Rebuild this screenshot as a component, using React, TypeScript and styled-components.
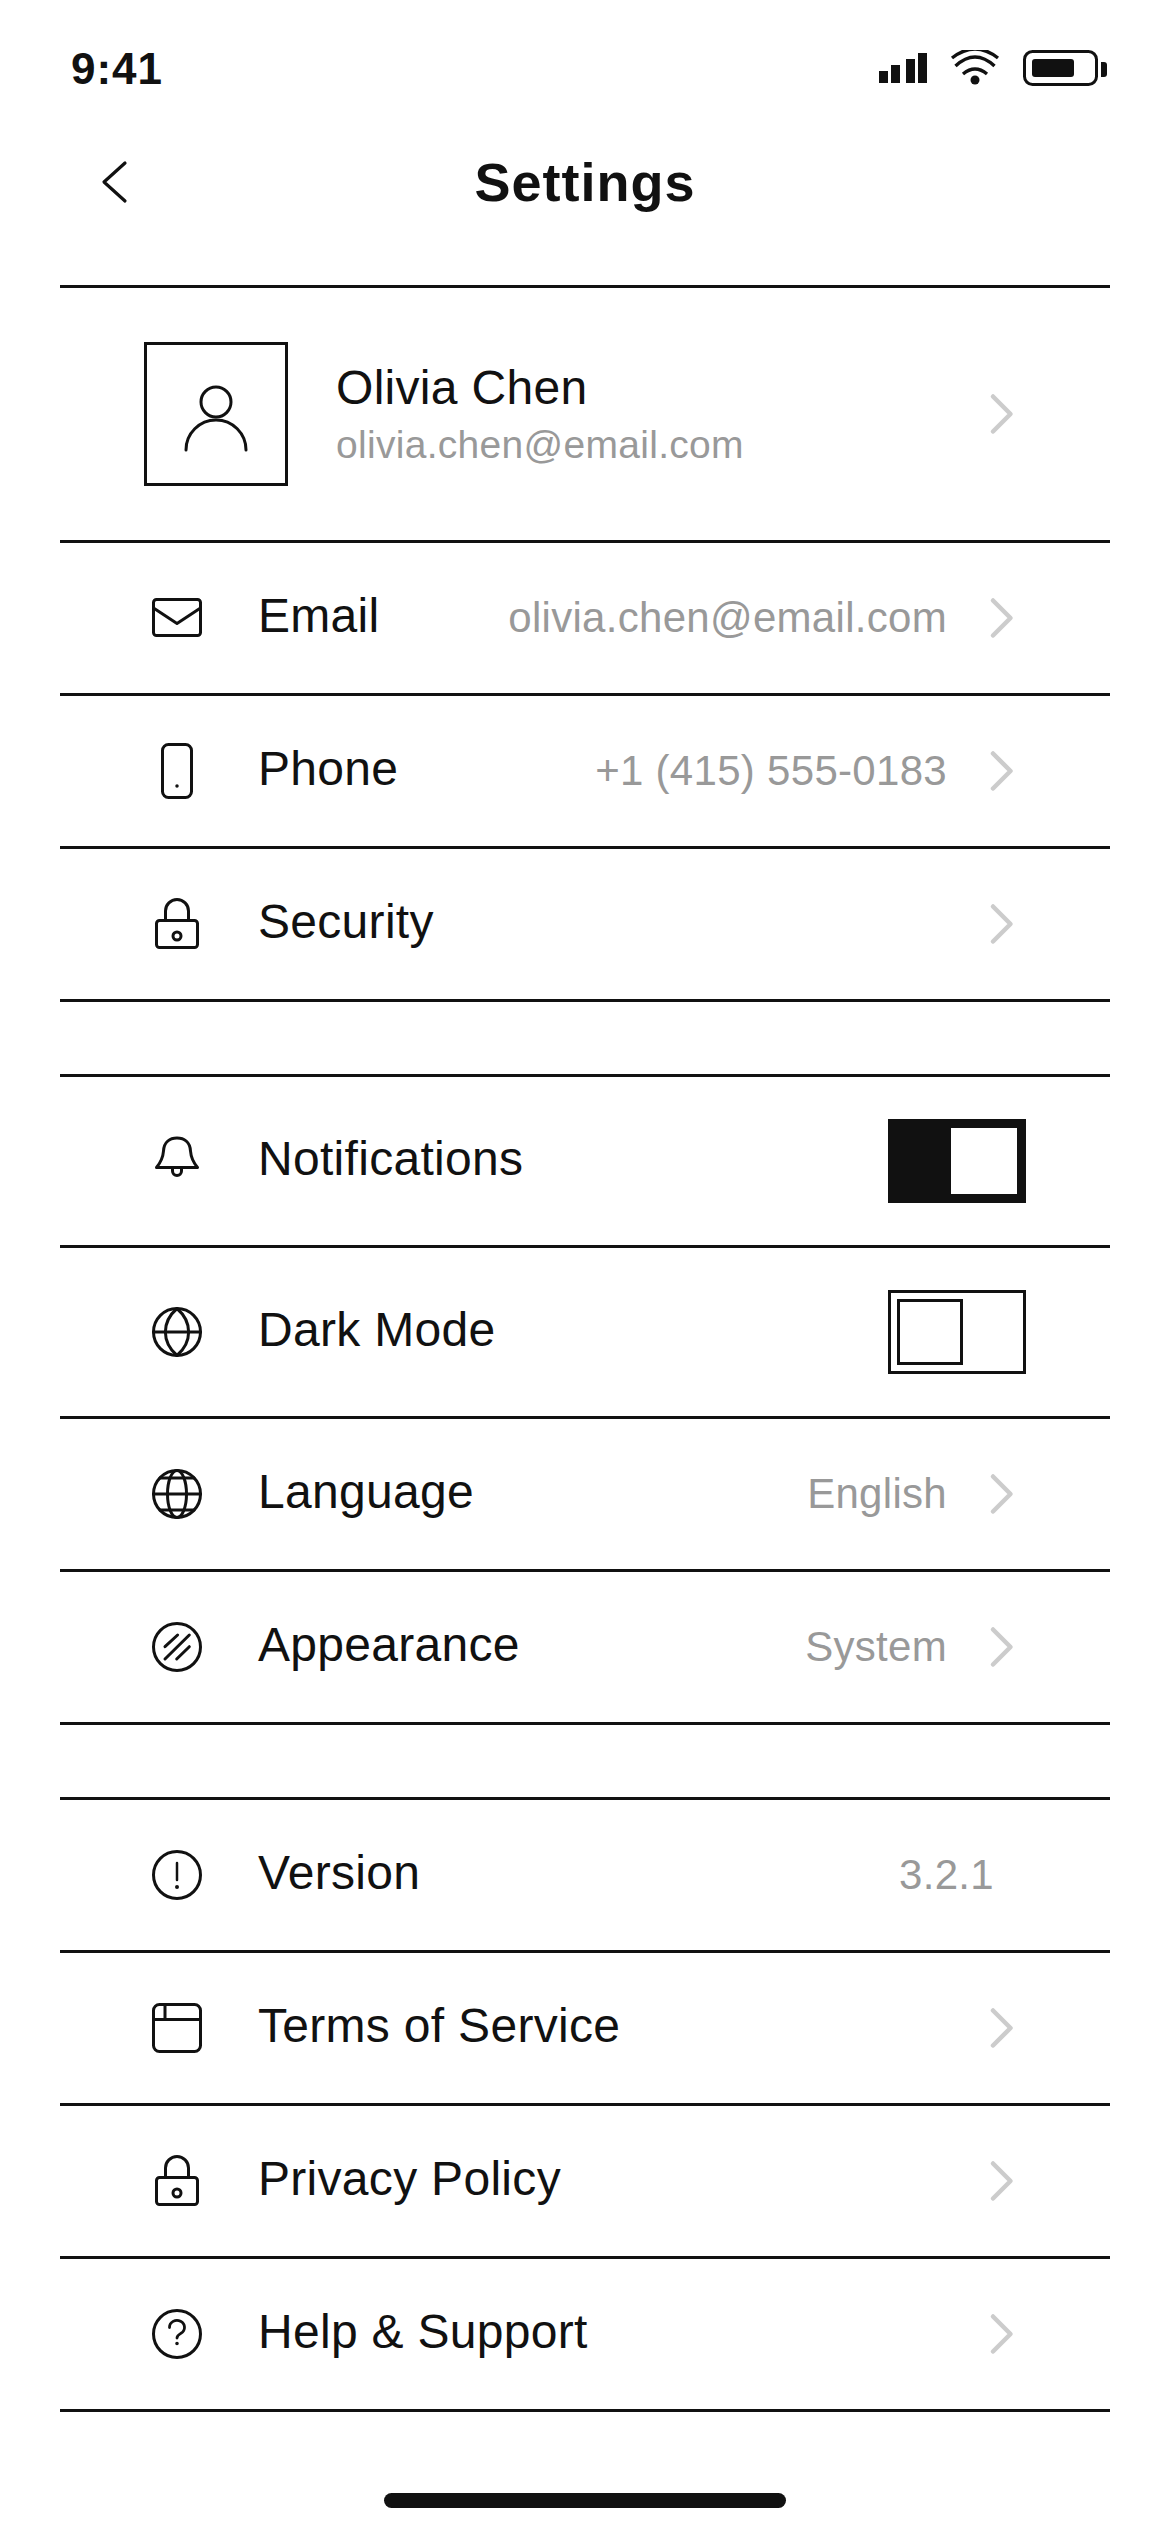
import React from "react";
import styled, { createGlobalStyle } from "styled-components";

const INK = "#111111";

const GlobalStyle = createGlobalStyle`
  html, body {
    margin: 0;
    padding: 0;
    background: #ffffff;
  }
  body {
    font-family: "Liberation Sans", Arial, sans-serif;
    color: ${INK};
  }
`;

const Screen = styled.div`
  width: 1170px;
  height: 2532px;
  padding: 0 60px;
  box-sizing: border-box;
  background: #fff;
  display: flex;
  flex-direction: column;
`;

const StatusBar = styled.div`
  height: 136px;
  flex: none;
  display: flex;
  justify-content: space-between;
  align-items: center;
`;

const Clock = styled.span`
  font-size: 44px;
  font-weight: 700;
  letter-spacing: 1px;
  margin-left: 11px;
  margin-top: 2px;
`;

const StatusIcons = styled.svg`
  display: block;
  margin-right: 3px;
`;

const NavBar = styled.header`
  height: 152px;
  flex: none;
  box-sizing: border-box;
  position: relative;
  display: flex;
  align-items: center;
  justify-content: center;
  border-bottom: 3px solid ${INK};
  padding-bottom: 57px;
`;

const BackIcon = styled.svg`
  position: absolute;
  left: 40px;
  top: 24px;
`;

const Title = styled.h1`
  margin: 0;
  font-size: 54px;
  font-weight: 700;
  letter-spacing: 1px;
`;

const Group = styled.section<{ $top?: number }>`
  margin-top: ${(p) => p.$top ?? 72}px;
  border-top: ${(p) => (p.$top === 0 ? "none" : `3px solid ${INK}`)};
`;

const ProfileRow = styled.div`
  height: 255px;
  box-sizing: border-box;
  display: flex;
  align-items: center;
  padding-left: 84px;
  padding-right: 95px;
  border-bottom: 3px solid ${INK};
`;

const Avatar = styled.div`
  width: 144px;
  height: 144px;
  box-sizing: border-box;
  border: 3px solid ${INK};
  display: flex;
  align-items: center;
  justify-content: center;
  flex: none;
`;

const PersonIcon = styled.svg`
  margin-top: 14px;
  fill: none;
  stroke: ${INK};
  stroke-width: 3;
  stroke-linecap: round;
`;

const ProfileText = styled.div`
  flex: 1;
  margin-left: 48px;
  display: flex;
  flex-direction: column;
  gap: 6px;
`;

const Name = styled.span`
  font-size: 48px;
  line-height: 56px;
  letter-spacing: 0.3px;
`;

const ProfileEmail = styled.span`
  font-size: 39px;
  line-height: 46px;
  letter-spacing: 0.3px;
  color: #999999;
`;

const Row = styled.div<{ $tall?: boolean }>`
  height: ${(p) => (p.$tall ? 171 : 153)}px;
  box-sizing: border-box;
  display: flex;
  align-items: center;
  padding-left: 87px;
  padding-right: 95px;
  border-bottom: 3px solid ${INK};
`;

const IconSlot = styled.svg`
  flex: none;
  width: 60px;
  height: 60px;
  fill: none;
  stroke: ${INK};
  stroke-width: 3;
  stroke-linecap: round;
  stroke-linejoin: round;
`;

const Label = styled.span`
  flex: 1;
  margin-left: 51px;
  padding-bottom: 5px;
  font-size: 48px;
  line-height: 56px;
  letter-spacing: 0.3px;
`;

const Value = styled.span<{ $plain?: boolean }>`
  font-size: 42px;
  line-height: 50px;
  letter-spacing: 0.3px;
  color: #999999;
  margin-right: ${(p) => (p.$plain ? "21px" : "0")};
`;

const Chevron = styled.svg`
  flex: none;
  margin-left: 42px;
  fill: none;
  stroke: #cccccc;
  stroke-width: 4.5;
  stroke-linecap: round;
  stroke-linejoin: round;
`;

const Toggle = styled.div<{ $on?: boolean }>`
  width: 138px;
  height: 84px;
  box-sizing: border-box;
  margin-right: -11px;
  border: 3px solid ${INK};
  padding: 6px;
  background: ${(p) => (p.$on ? INK : "#fff")};
  display: flex;
  justify-content: ${(p) => (p.$on ? "flex-end" : "flex-start")};
`;

const Knob = styled.div<{ $on?: boolean }>`
  width: 66px;
  height: 66px;
  box-sizing: border-box;
  background: #fff;
  border: ${(p) => (p.$on ? "none" : `3px solid ${INK}`)};
`;

const HomeBar = styled.div`
  width: 402px;
  height: 15px;
  border-radius: 8px;
  background: ${INK};
  align-self: center;
  margin-top: 81px;
  flex: none;
`;

const ChevronRight = () => (
  <Chevron width="26" height="46" viewBox="0 0 26 46">
    <path d="M4 5.5 L21.5 23 L4 40.5" />
  </Chevron>
);

const MailIcon = () => (
  <IconSlot viewBox="0 0 60 60">
    <rect x="6.5" y="11.5" width="47" height="36" rx="3" />
    <path d="M6.5 20 L30 35.5 L53.5 20" />
  </IconSlot>
);

const PhoneIcon = () => (
  <IconSlot viewBox="0 0 60 60">
    <rect x="15.5" y="3.5" width="29" height="53" rx="6" />
    <circle cx="30" cy="45" r="1" strokeWidth="1.5" fill={INK} />
  </IconSlot>
);

const LockIcon = () => (
  <IconSlot viewBox="0 0 60 60">
    <rect x="9.5" y="26.5" width="41" height="27" rx="3" />
    <path d="M18.5 26 V17 a11.5 11.5 0 0 1 23 0 V26" />
    <circle cx="30" cy="42" r="4" />
  </IconSlot>
);

const BellIcon = () => (
  <IconSlot viewBox="0 0 60 60">
    <path d="M9.5 36.5 C14 31 16 27 16.5 20 C17 11 23 7 30 7 C37 7 43 11 43.5 20 C44 27 46 31 50.5 36.5 Z" />
    <path d="M25.5 36.5 V40 a4.5 4.5 0 0 0 9 0 V36.5" />
  </IconSlot>
);

const LensGlobeIcon = () => (
  <IconSlot viewBox="0 0 60 60">
    <circle cx="30" cy="30" r="23.5" />
    <path d="M6.5 30 H53.5" />
    <path d="M30 6.5 C14.5 20 14.5 40 30 53.5 C45.5 40 45.5 20 30 6.5 Z" />
  </IconSlot>
);

const GlobeIcon = () => (
  <IconSlot viewBox="0 0 60 60">
    <circle cx="30" cy="30" r="23.5" />
    <ellipse cx="30" cy="30" rx="9.5" ry="23.5" />
    <path d="M6.5 30 H53.5 M13 14 H47 M13 46 H47" />
  </IconSlot>
);

const StripesIcon = () => (
  <IconSlot viewBox="0 0 60 60">
    <circle cx="30" cy="30" r="23.5" />
    <path d="M18 42 L42.3 18 M18 29.7 L30.6 18 M29.7 42 L42.3 29.7" />
  </IconSlot>
);

const InfoIcon = () => (
  <IconSlot viewBox="0 0 60 60">
    <circle cx="30" cy="30" r="23.5" />
    <path d="M30 18 V35" strokeWidth="2.5" />
    <circle cx="30" cy="42" r="1" strokeWidth="2" fill={INK} />
  </IconSlot>
);

const WindowIcon = () => (
  <IconSlot viewBox="0 0 60 60">
    <rect x="6.5" y="6.5" width="47" height="47" rx="6" />
    <path d="M6.5 21.5 H53.5 M18 6.5 V21.5" />
  </IconSlot>
);

const HelpIcon = () => (
  <IconSlot viewBox="0 0 60 60">
    <circle cx="30" cy="30" r="23.5" />
    <path d="M22.5 23.5 a7.5 7 0 1 1 11.5 5.8 c-2.6 1.6 -4 2.4 -4 4.7" strokeWidth="2.8" />
    <circle cx="30" cy="39.5" r="0.8" strokeWidth="2" fill={INK} />
  </IconSlot>
);

const Toggled = ({ on }: { on?: boolean }) => (
  <Toggle $on={on}>
    <Knob $on={on} />
  </Toggle>
);

export default function App() {
  return (
    <>
      <GlobalStyle />
      <Screen>
        <StatusBar>
          <Clock>9:41</Clock>
          <StatusIcons width="228" height="37" viewBox="879 51 228 37">
            <rect x="879" y="72" width="9" height="12" fill={INK} />
            <rect x="891" y="66" width="9" height="18" fill={INK} />
            <rect x="906" y="60" width="9" height="24" fill={INK} />
            <rect x="918" y="54" width="9" height="30" fill={INK} />
            <g fill="none" stroke={INK} strokeWidth="3.4">
              <path d="M963 75 Q975 65 987 75" />
              <path d="M955.5 67 Q975 49 994.5 67" />
              <path d="M952 59 Q975 41 998 59" />
            </g>
            <circle cx="975" cy="81" r="4.5" fill={INK} />
            <rect x="1024.5" y="52.5" width="72" height="33" rx="8" fill="none" stroke={INK} strokeWidth="3" />
            <rect x="1032" y="60" width="42" height="18" rx="3" fill={INK} />
            <path d="M1101 63 H1104 Q1107 63 1107 66 V75 Q1107 78 1104 78 H1101 Z" fill={INK} />
          </StatusIcons>
        </StatusBar>

        <NavBar>
          <BackIcon width="30" height="44" viewBox="0 0 30 44" fill="none" stroke={INK} strokeWidth="3.2" strokeLinecap="round" strokeLinejoin="round">
            <path d="M25 3 L4 22 L25 41" />
          </BackIcon>
          <Title>Settings</Title>
        </NavBar>

        <Group $top={0}>
          <ProfileRow>
            <Avatar>
              <PersonIcon width="66" height="72" viewBox="0 0 66 72">
                <circle cx="33" cy="17" r="15" />
                <path d="M3 65 A30 30 0 0 1 63 65" />
              </PersonIcon>
            </Avatar>
            <ProfileText>
              <Name>Olivia Chen</Name>
              <ProfileEmail>olivia.chen@email.com</ProfileEmail>
            </ProfileText>
            <ChevronRight />
          </ProfileRow>
          <Row>
            <MailIcon />
            <Label>Email</Label>
            <Value>olivia.chen@email.com</Value>
            <ChevronRight />
          </Row>
          <Row>
            <PhoneIcon />
            <Label>Phone</Label>
            <Value>+1 (415) 555-0183</Value>
            <ChevronRight />
          </Row>
          <Row>
            <LockIcon />
            <Label>Security</Label>
            <ChevronRight />
          </Row>
        </Group>

        <Group>
          <Row $tall>
            <BellIcon />
            <Label>Notifications</Label>
            <Toggled on />
          </Row>
          <Row $tall>
            <LensGlobeIcon />
            <Label>Dark Mode</Label>
            <Toggled />
          </Row>
          <Row>
            <GlobeIcon />
            <Label>Language</Label>
            <Value>English</Value>
            <ChevronRight />
          </Row>
          <Row>
            <StripesIcon />
            <Label>Appearance</Label>
            <Value>System</Value>
            <ChevronRight />
          </Row>
        </Group>

        <Group>
          <Row>
            <InfoIcon />
            <Label>Version</Label>
            <Value $plain>3.2.1</Value>
          </Row>
          <Row>
            <WindowIcon />
            <Label>Terms of Service</Label>
            <ChevronRight />
          </Row>
          <Row>
            <LockIcon />
            <Label>Privacy Policy</Label>
            <ChevronRight />
          </Row>
          <Row>
            <HelpIcon />
            <Label>Help &amp; Support</Label>
            <ChevronRight />
          </Row>
        </Group>

        <HomeBar />
      </Screen>
    </>
  );
}
